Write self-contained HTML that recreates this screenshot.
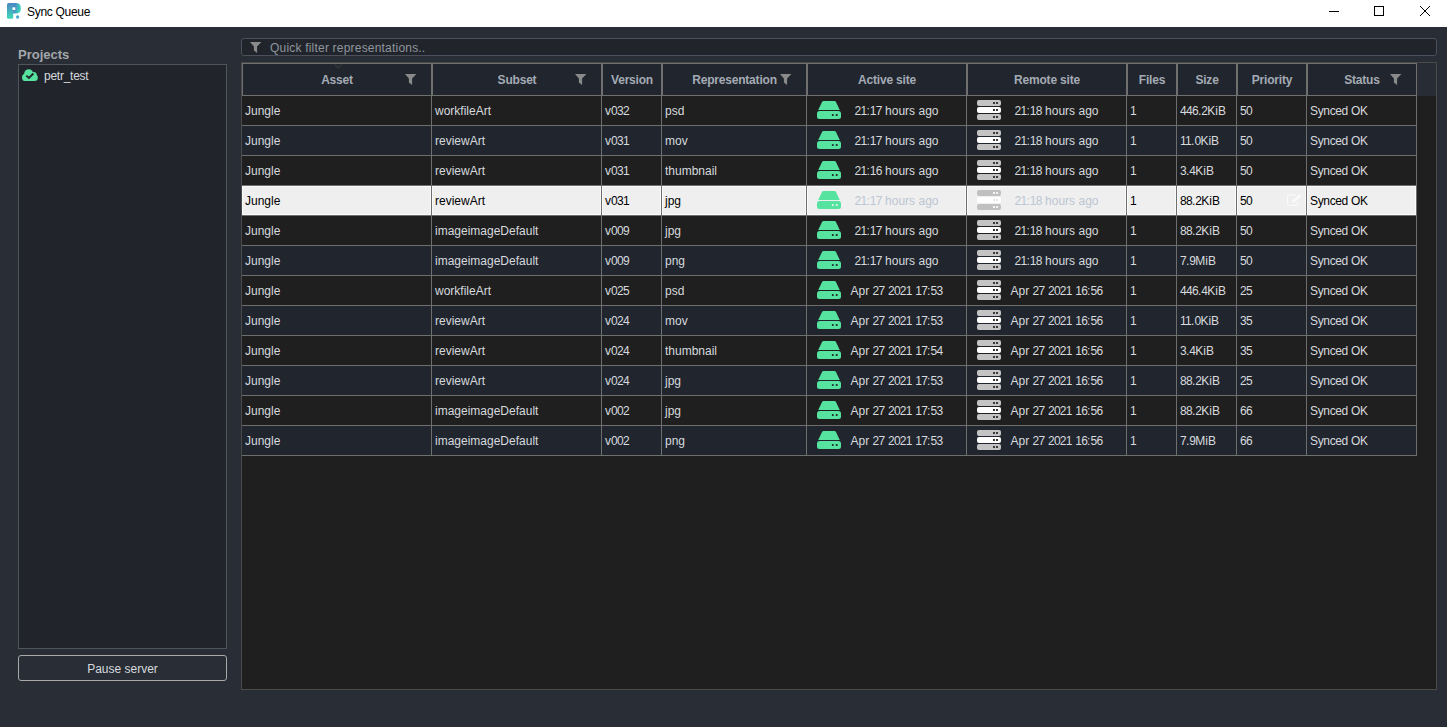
<!DOCTYPE html>
<html><head><meta charset="utf-8"><style>
html,body{margin:0;padding:0;width:1447px;height:727px;overflow:hidden;background:#292d35;font-family:"Liberation Sans",sans-serif;}
.a{position:absolute;}
.t{position:absolute;white-space:nowrap;font-size:12px;line-height:14px;height:14px;color:#d6dade;}
.h{position:absolute;white-space:nowrap;font-size:12px;font-weight:bold;line-height:16px;color:#a4abb4;text-align:center;letter-spacing:-0.2px}
.ln{position:absolute;background:#6e6e6e;}
</style></head><body>

<div class="a" style="left:0;top:0;width:1447px;height:27px;background:#ffffff"></div>
<svg class="a" style="left:7px;top:3px" width="15" height="17" viewBox="0 0 15 17"><defs><linearGradient id="lg1" x1="0" y1="0" x2="0" y2="1"><stop offset="0" stop-color="#4d86c6"/><stop offset="1" stop-color="#3ddbb5"/></linearGradient><linearGradient id="lg2" x1="0" y1="0" x2="1" y2="0.3"><stop offset="0.3" stop-color="#4a8cc8"/><stop offset="1" stop-color="#3cd8b8"/></linearGradient></defs>
<path d="M6 0H8.6Q13.9 0 13.9 5.3Q13.9 10.6 8.6 10.6H6Z" fill="url(#lg2)"/><path d="M1.5 0H6.2V14.2Q6.2 15.7 4.7 15.7H1.5Q0 15.7 0 14.2V1.5Q0 0 1.5 0Z" fill="url(#lg1)"/><rect x="5.5" y="4.3" width="2.8" height="2.8" rx="0.6" fill="#fff"/><circle cx="10.6" cy="14" r="1.65" fill="#48a6d6"/></svg>
<div class="t" style="left:27px;top:5px;color:#000;font-size:12px;letter-spacing:-0.3px">Sync Queue</div>
<div class="a" style="left:1329px;top:11px;width:10px;height:1px;background:#000"></div>
<div class="a" style="left:1374px;top:6px;width:8px;height:8px;border:1px solid #000"></div>
<svg class="a" style="left:1419px;top:5px" width="12" height="12" viewBox="0 0 12 12"><path d="M1 1L11 11M11 1L1 11" stroke="#000" stroke-width="1"/></svg>
<div class="a" style="left:18px;top:47px;font-size:13px;font-weight:bold;color:#a3a6ab;white-space:nowrap;line-height:16px">Projects</div>
<div class="a" style="left:18px;top:64px;width:207px;height:583px;border:1px solid #50545b;background:#21252b"></div>
<svg class="a" style="left:22px;top:69px" width="17" height="13" viewBox="0 0 17 13"><g fill="#56e39f"><circle cx="3.6" cy="8.4" r="3.6"/><circle cx="6.7" cy="4.8" r="4.5"/><circle cx="11.4" cy="6.4" r="3.4"/><circle cx="12.6" cy="8.8" r="3.2"/><rect x="3.6" y="6" width="9" height="6"/></g><path d="M4.3 6.6L6.9 9L11.4 4.5" stroke="#21252b" stroke-width="1.9" fill="none"/></svg>
<div class="t" style="left:44px;top:69px;letter-spacing:-0.25px">petr_test</div>
<div class="a" style="left:18px;top:655px;width:207px;height:24px;border:1px solid #a9a9a9;border-radius:3px;background:#292d35"></div>
<div class="t" style="left:18px;width:209px;text-align:center;top:662px">Pause server</div>
<div class="a" style="left:241px;top:38px;width:1194px;height:16px;border:1px solid #4b515c;border-radius:3px;background:#21252b"></div>
<svg class="a" style="left:249.5px;top:42px" width="12" height="11" viewBox="0 0 12 11"><path d="M0 0H11.4L7.1 4.6V11L3.9 8.4V4.6Z" fill="#8a8a8a"/></svg>
<div class="t" style="left:270px;top:41px;color:#8f959e;letter-spacing:0.2px">Quick filter representations..</div>
<div class="a" style="left:241px;top:62px;width:1194px;height:626px;border:1px solid #4a4a4a;background:#1f1f1f"></div>
<div class="a" style="left:242px;top:63px;width:1194px;height:33px;background:#282c34"></div>
<div class="a" style="left:242px;top:63px;width:188px;height:31px;border:1px solid #707070;background:#21252e"></div>
<div class="h" style="left:242px;width:190px;top:72px">Asset</div>
<svg class="a" style="left:405px;top:74px" width="12" height="11" viewBox="0 0 12 11"><path d="M0 0H11.4L7.1 4.6V11L3.9 8.4V4.6Z" fill="#8a8a8a"/></svg>
<div class="a" style="left:432px;top:63px;width:168px;height:31px;border:1px solid #707070;background:#21252e"></div>
<div class="h" style="left:432px;width:170px;top:72px">Subset</div>
<svg class="a" style="left:575px;top:74px" width="12" height="11" viewBox="0 0 12 11"><path d="M0 0H11.4L7.1 4.6V11L3.9 8.4V4.6Z" fill="#8a8a8a"/></svg>
<div class="a" style="left:602px;top:63px;width:58px;height:31px;border:1px solid #707070;background:#21252e"></div>
<div class="h" style="left:602px;width:60px;top:72px">Version</div>
<div class="a" style="left:662px;top:63px;width:143px;height:31px;border:1px solid #707070;background:#21252e"></div>
<div class="h" style="left:662px;width:145px;top:72px">Representation</div>
<svg class="a" style="left:780px;top:74px" width="12" height="11" viewBox="0 0 12 11"><path d="M0 0H11.4L7.1 4.6V11L3.9 8.4V4.6Z" fill="#8a8a8a"/></svg>
<div class="a" style="left:807px;top:63px;width:158px;height:31px;border:1px solid #707070;background:#21252e"></div>
<div class="h" style="left:807px;width:160px;top:72px">Active site</div>
<div class="a" style="left:967px;top:63px;width:158px;height:31px;border:1px solid #707070;background:#21252e"></div>
<div class="h" style="left:967px;width:160px;top:72px">Remote site</div>
<div class="a" style="left:1127px;top:63px;width:48px;height:31px;border:1px solid #707070;background:#21252e"></div>
<div class="h" style="left:1127px;width:50px;top:72px">Files</div>
<div class="a" style="left:1177px;top:63px;width:58px;height:31px;border:1px solid #707070;background:#21252e"></div>
<div class="h" style="left:1177px;width:60px;top:72px">Size</div>
<div class="a" style="left:1237px;top:63px;width:68px;height:31px;border:1px solid #707070;background:#21252e"></div>
<div class="h" style="left:1237px;width:70px;top:72px">Priority</div>
<div class="a" style="left:1307px;top:63px;width:108px;height:31px;border:1px solid #707070;background:#21252e"></div>
<div class="h" style="left:1307px;width:110px;top:72px">Status</div>
<svg class="a" style="left:1390px;top:74px" width="12" height="11" viewBox="0 0 12 11"><path d="M0 0H11.4L7.1 4.6V11L3.9 8.4V4.6Z" fill="#8a8a8a"/></svg>
<svg class="a" style="left:334px;top:64px" width="8" height="5" viewBox="0 0 8 5"><path d="M0.5 0.5L4 4L7.5 0.5" stroke="#34363a" stroke-width="1.2" fill="none"/></svg>
<div class="a" style="left:242px;top:96px;width:1174px;height:29px;background:#1f1f1f"></div>
<div class="ln" style="left:242px;top:125px;width:1175px;height:1px"></div>
<div class="t" style="left:245px;top:104px;color:#d6dade">Jungle</div>
<div class="t" style="left:435px;top:104px;color:#d6dade">workfileArt</div>
<div class="t" style="left:605px;top:104px;color:#d6dade">v<i style="font-style:normal;letter-spacing:-0.7px">032</i></div>
<div class="t" style="left:665px;top:104px;color:#d6dade">psd</div>
<div class="t" style="left:1130px;top:104px;color:#d6dade"><i style="font-style:normal;letter-spacing:-0.7px">1</i></div>
<div class="t" style="left:1180px;top:104px;color:#d6dade"><i style="font-style:normal;letter-spacing:-0.7px">446</i>.<i style="font-style:normal;letter-spacing:-0.7px">2</i>KiB</div>
<div class="t" style="left:1240px;top:104px;color:#d6dade"><i style="font-style:normal;letter-spacing:-0.7px">50</i></div>
<div class="t" style="left:1310px;top:104px;color:#d6dade;letter-spacing:-0.35px">Synced OK</div>
<svg class="a" style="left:817px;top:101px" width="24" height="18" viewBox="0 0 24 18"><path d="M6.6 0H17.4Q18.6 0 19.1 1.2L22.8 9H1.2L4.9 1.2Q5.4 0 6.6 0Z" fill="#56e39f"/><rect x="0" y="10" width="24" height="8" rx="2.5" fill="#56e39f"/><circle cx="15.8" cy="14" r="1.05" fill="#1f1f1f"/><circle cx="19.7" cy="14" r="1.05" fill="#1f1f1f"/></svg>
<div class="t" style="left:796.5px;width:200px;text-align:center;top:104px;color:#d6dade"><i style="font-style:normal;letter-spacing:-0.7px">21</i>:<i style="font-style:normal;letter-spacing:-0.7px">17</i> hours ago</div>
<svg class="a" style="left:977px;top:100px" width="24" height="20" viewBox="0 0 24 20"><rect x="0" y="0" width="24" height="6" rx="2" fill="#c4c4c4"/><rect x="16" y="2" width="2" height="2" fill="#3a3a3a"/><rect x="19" y="2" width="2" height="2" fill="#3a3a3a"/><rect x="0" y="7" width="24" height="6" rx="2" fill="#ffffff"/><rect x="16" y="9" width="2" height="2" fill="#3a3a3a"/><rect x="19" y="9" width="2" height="2" fill="#3a3a3a"/><rect x="0" y="14" width="24" height="6" rx="2" fill="#c4c4c4"/><rect x="16" y="16" width="2" height="2" fill="#3a3a3a"/><rect x="19" y="16" width="2" height="2" fill="#3a3a3a"/></svg>
<div class="t" style="left:956.5px;width:200px;text-align:center;top:104px;color:#d6dade"><i style="font-style:normal;letter-spacing:-0.7px">21</i>:<i style="font-style:normal;letter-spacing:-0.7px">18</i> hours ago</div>
<div class="a" style="left:242px;top:126px;width:1174px;height:29px;background:#21252e"></div>
<div class="ln" style="left:242px;top:155px;width:1175px;height:1px"></div>
<div class="t" style="left:245px;top:134px;color:#d6dade">Jungle</div>
<div class="t" style="left:435px;top:134px;color:#d6dade">reviewArt</div>
<div class="t" style="left:605px;top:134px;color:#d6dade">v<i style="font-style:normal;letter-spacing:-0.7px">031</i></div>
<div class="t" style="left:665px;top:134px;color:#d6dade">mov</div>
<div class="t" style="left:1130px;top:134px;color:#d6dade"><i style="font-style:normal;letter-spacing:-0.7px">1</i></div>
<div class="t" style="left:1180px;top:134px;color:#d6dade"><i style="font-style:normal;letter-spacing:-0.7px">11</i>.<i style="font-style:normal;letter-spacing:-0.7px">0</i>KiB</div>
<div class="t" style="left:1240px;top:134px;color:#d6dade"><i style="font-style:normal;letter-spacing:-0.7px">50</i></div>
<div class="t" style="left:1310px;top:134px;color:#d6dade;letter-spacing:-0.35px">Synced OK</div>
<svg class="a" style="left:817px;top:131px" width="24" height="18" viewBox="0 0 24 18"><path d="M6.6 0H17.4Q18.6 0 19.1 1.2L22.8 9H1.2L4.9 1.2Q5.4 0 6.6 0Z" fill="#56e39f"/><rect x="0" y="10" width="24" height="8" rx="2.5" fill="#56e39f"/><circle cx="15.8" cy="14" r="1.05" fill="#21252e"/><circle cx="19.7" cy="14" r="1.05" fill="#21252e"/></svg>
<div class="t" style="left:796.5px;width:200px;text-align:center;top:134px;color:#d6dade"><i style="font-style:normal;letter-spacing:-0.7px">21</i>:<i style="font-style:normal;letter-spacing:-0.7px">17</i> hours ago</div>
<svg class="a" style="left:977px;top:130px" width="24" height="20" viewBox="0 0 24 20"><rect x="0" y="0" width="24" height="6" rx="2" fill="#c4c4c4"/><rect x="16" y="2" width="2" height="2" fill="#3a3a3a"/><rect x="19" y="2" width="2" height="2" fill="#3a3a3a"/><rect x="0" y="7" width="24" height="6" rx="2" fill="#ffffff"/><rect x="16" y="9" width="2" height="2" fill="#3a3a3a"/><rect x="19" y="9" width="2" height="2" fill="#3a3a3a"/><rect x="0" y="14" width="24" height="6" rx="2" fill="#c4c4c4"/><rect x="16" y="16" width="2" height="2" fill="#3a3a3a"/><rect x="19" y="16" width="2" height="2" fill="#3a3a3a"/></svg>
<div class="t" style="left:956.5px;width:200px;text-align:center;top:134px;color:#d6dade"><i style="font-style:normal;letter-spacing:-0.7px">21</i>:<i style="font-style:normal;letter-spacing:-0.7px">18</i> hours ago</div>
<div class="a" style="left:242px;top:156px;width:1174px;height:29px;background:#1f1f1f"></div>
<div class="ln" style="left:242px;top:185px;width:1175px;height:1px"></div>
<div class="t" style="left:245px;top:164px;color:#d6dade">Jungle</div>
<div class="t" style="left:435px;top:164px;color:#d6dade">reviewArt</div>
<div class="t" style="left:605px;top:164px;color:#d6dade">v<i style="font-style:normal;letter-spacing:-0.7px">031</i></div>
<div class="t" style="left:665px;top:164px;color:#d6dade">thumbnail</div>
<div class="t" style="left:1130px;top:164px;color:#d6dade"><i style="font-style:normal;letter-spacing:-0.7px">1</i></div>
<div class="t" style="left:1180px;top:164px;color:#d6dade"><i style="font-style:normal;letter-spacing:-0.7px">3</i>.<i style="font-style:normal;letter-spacing:-0.7px">4</i>KiB</div>
<div class="t" style="left:1240px;top:164px;color:#d6dade"><i style="font-style:normal;letter-spacing:-0.7px">50</i></div>
<div class="t" style="left:1310px;top:164px;color:#d6dade;letter-spacing:-0.35px">Synced OK</div>
<svg class="a" style="left:817px;top:161px" width="24" height="18" viewBox="0 0 24 18"><path d="M6.6 0H17.4Q18.6 0 19.1 1.2L22.8 9H1.2L4.9 1.2Q5.4 0 6.6 0Z" fill="#56e39f"/><rect x="0" y="10" width="24" height="8" rx="2.5" fill="#56e39f"/><circle cx="15.8" cy="14" r="1.05" fill="#1f1f1f"/><circle cx="19.7" cy="14" r="1.05" fill="#1f1f1f"/></svg>
<div class="t" style="left:796.5px;width:200px;text-align:center;top:164px;color:#d6dade"><i style="font-style:normal;letter-spacing:-0.7px">21</i>:<i style="font-style:normal;letter-spacing:-0.7px">16</i> hours ago</div>
<svg class="a" style="left:977px;top:160px" width="24" height="20" viewBox="0 0 24 20"><rect x="0" y="0" width="24" height="6" rx="2" fill="#c4c4c4"/><rect x="16" y="2" width="2" height="2" fill="#3a3a3a"/><rect x="19" y="2" width="2" height="2" fill="#3a3a3a"/><rect x="0" y="7" width="24" height="6" rx="2" fill="#ffffff"/><rect x="16" y="9" width="2" height="2" fill="#3a3a3a"/><rect x="19" y="9" width="2" height="2" fill="#3a3a3a"/><rect x="0" y="14" width="24" height="6" rx="2" fill="#c4c4c4"/><rect x="16" y="16" width="2" height="2" fill="#3a3a3a"/><rect x="19" y="16" width="2" height="2" fill="#3a3a3a"/></svg>
<div class="t" style="left:956.5px;width:200px;text-align:center;top:164px;color:#d6dade"><i style="font-style:normal;letter-spacing:-0.7px">21</i>:<i style="font-style:normal;letter-spacing:-0.7px">18</i> hours ago</div>
<div class="a" style="left:242px;top:186px;width:187px;height:27px;border:1px solid #fafafa;background:#efefef"></div>
<div class="a" style="left:432px;top:186px;width:167px;height:27px;border:1px solid #fafafa;background:#efefef"></div>
<div class="a" style="left:602px;top:186px;width:57px;height:27px;border:1px solid #fafafa;background:#efefef"></div>
<div class="a" style="left:662px;top:186px;width:142px;height:27px;border:1px solid #fafafa;background:#efefef"></div>
<div class="a" style="left:807px;top:186px;width:157px;height:27px;border:1px solid #fafafa;background:#efefef"></div>
<div class="a" style="left:967px;top:186px;width:157px;height:27px;border:1px solid #fafafa;background:#efefef"></div>
<div class="a" style="left:1127px;top:186px;width:47px;height:27px;border:1px solid #fafafa;background:#efefef"></div>
<div class="a" style="left:1177px;top:186px;width:57px;height:27px;border:1px solid #fafafa;background:#efefef"></div>
<div class="a" style="left:1237px;top:186px;width:67px;height:27px;border:1px solid #fafafa;background:#efefef"></div>
<div class="a" style="left:1307px;top:186px;width:107px;height:27px;border:1px solid #fafafa;background:#efefef"></div>
<div class="ln" style="left:242px;top:215px;width:1175px;height:1px"></div>
<div class="t" style="left:245px;top:194px;color:#000000">Jungle</div>
<div class="t" style="left:435px;top:194px;color:#000000">reviewArt</div>
<div class="t" style="left:605px;top:194px;color:#000000">v<i style="font-style:normal;letter-spacing:-0.7px">031</i></div>
<div class="t" style="left:665px;top:194px;color:#000000">jpg</div>
<div class="t" style="left:1130px;top:194px;color:#000000"><i style="font-style:normal;letter-spacing:-0.7px">1</i></div>
<div class="t" style="left:1180px;top:194px;color:#000000"><i style="font-style:normal;letter-spacing:-0.7px">88</i>.<i style="font-style:normal;letter-spacing:-0.7px">2</i>KiB</div>
<div class="t" style="left:1240px;top:194px;color:#000000"><i style="font-style:normal;letter-spacing:-0.7px">50</i></div>
<div class="t" style="left:1310px;top:194px;color:#000000;letter-spacing:-0.35px">Synced OK</div>
<svg class="a" style="left:817px;top:191px" width="24" height="18" viewBox="0 0 24 18"><path d="M6.6 0H17.4Q18.6 0 19.1 1.2L22.8 9H1.2L4.9 1.2Q5.4 0 6.6 0Z" fill="#56e39f"/><rect x="0" y="10" width="24" height="8" rx="2.5" fill="#56e39f"/><circle cx="15.8" cy="14" r="1.05" fill="#efefef"/><circle cx="19.7" cy="14" r="1.05" fill="#efefef"/></svg>
<div class="t" style="left:796.5px;width:200px;text-align:center;top:194px;color:#bcc6d3"><i style="font-style:normal;letter-spacing:-0.7px">21</i>:<i style="font-style:normal;letter-spacing:-0.7px">17</i> hours ago</div>
<svg class="a" style="left:977px;top:190px" width="24" height="20" viewBox="0 0 24 20"><rect x="0" y="0" width="24" height="6" rx="2" fill="#c0c0c0"/><rect x="16" y="2" width="2" height="2" fill="#f4f4f4"/><rect x="19" y="2" width="2" height="2" fill="#f4f4f4"/><rect x="0" y="7" width="24" height="6" rx="2" fill="#ffffff"/><rect x="16" y="9" width="2" height="2" fill="#e8e8e8"/><rect x="19" y="9" width="2" height="2" fill="#e8e8e8"/><rect x="0" y="14" width="24" height="6" rx="2" fill="#c0c0c0"/><rect x="16" y="16" width="2" height="2" fill="#f4f4f4"/><rect x="19" y="16" width="2" height="2" fill="#f4f4f4"/></svg>
<div class="t" style="left:956.5px;width:200px;text-align:center;top:194px;color:#bcc6d3"><i style="font-style:normal;letter-spacing:-0.7px">21</i>:<i style="font-style:normal;letter-spacing:-0.7px">18</i> hours ago</div>
<svg class="a" style="left:1287px;top:194px" width="15" height="12" viewBox="0 0 15 12"><path d="M9 1H2.5Q0.5 1 0.5 3V9.5Q0.5 11.5 2.5 11.5H9Q11 11.5 11 9.5V7.5" stroke="#fbfbfb" stroke-width="1" fill="none"/><path d="M5 8.5L5.5 6.5L12.5 0.3L14.5 2L7.5 8.3Z" fill="#fafafa"/></svg>
<div class="a" style="left:242px;top:216px;width:1174px;height:29px;background:#1f1f1f"></div>
<div class="ln" style="left:242px;top:245px;width:1175px;height:1px"></div>
<div class="t" style="left:245px;top:224px;color:#d6dade">Jungle</div>
<div class="t" style="left:435px;top:224px;color:#d6dade">imageimageDefault</div>
<div class="t" style="left:605px;top:224px;color:#d6dade">v<i style="font-style:normal;letter-spacing:-0.7px">009</i></div>
<div class="t" style="left:665px;top:224px;color:#d6dade">jpg</div>
<div class="t" style="left:1130px;top:224px;color:#d6dade"><i style="font-style:normal;letter-spacing:-0.7px">1</i></div>
<div class="t" style="left:1180px;top:224px;color:#d6dade"><i style="font-style:normal;letter-spacing:-0.7px">88</i>.<i style="font-style:normal;letter-spacing:-0.7px">2</i>KiB</div>
<div class="t" style="left:1240px;top:224px;color:#d6dade"><i style="font-style:normal;letter-spacing:-0.7px">50</i></div>
<div class="t" style="left:1310px;top:224px;color:#d6dade;letter-spacing:-0.35px">Synced OK</div>
<svg class="a" style="left:817px;top:221px" width="24" height="18" viewBox="0 0 24 18"><path d="M6.6 0H17.4Q18.6 0 19.1 1.2L22.8 9H1.2L4.9 1.2Q5.4 0 6.6 0Z" fill="#56e39f"/><rect x="0" y="10" width="24" height="8" rx="2.5" fill="#56e39f"/><circle cx="15.8" cy="14" r="1.05" fill="#1f1f1f"/><circle cx="19.7" cy="14" r="1.05" fill="#1f1f1f"/></svg>
<div class="t" style="left:796.5px;width:200px;text-align:center;top:224px;color:#d6dade"><i style="font-style:normal;letter-spacing:-0.7px">21</i>:<i style="font-style:normal;letter-spacing:-0.7px">17</i> hours ago</div>
<svg class="a" style="left:977px;top:220px" width="24" height="20" viewBox="0 0 24 20"><rect x="0" y="0" width="24" height="6" rx="2" fill="#c4c4c4"/><rect x="16" y="2" width="2" height="2" fill="#3a3a3a"/><rect x="19" y="2" width="2" height="2" fill="#3a3a3a"/><rect x="0" y="7" width="24" height="6" rx="2" fill="#ffffff"/><rect x="16" y="9" width="2" height="2" fill="#3a3a3a"/><rect x="19" y="9" width="2" height="2" fill="#3a3a3a"/><rect x="0" y="14" width="24" height="6" rx="2" fill="#c4c4c4"/><rect x="16" y="16" width="2" height="2" fill="#3a3a3a"/><rect x="19" y="16" width="2" height="2" fill="#3a3a3a"/></svg>
<div class="t" style="left:956.5px;width:200px;text-align:center;top:224px;color:#d6dade"><i style="font-style:normal;letter-spacing:-0.7px">21</i>:<i style="font-style:normal;letter-spacing:-0.7px">18</i> hours ago</div>
<div class="a" style="left:242px;top:246px;width:1174px;height:29px;background:#21252e"></div>
<div class="ln" style="left:242px;top:275px;width:1175px;height:1px"></div>
<div class="t" style="left:245px;top:254px;color:#d6dade">Jungle</div>
<div class="t" style="left:435px;top:254px;color:#d6dade">imageimageDefault</div>
<div class="t" style="left:605px;top:254px;color:#d6dade">v<i style="font-style:normal;letter-spacing:-0.7px">009</i></div>
<div class="t" style="left:665px;top:254px;color:#d6dade">png</div>
<div class="t" style="left:1130px;top:254px;color:#d6dade"><i style="font-style:normal;letter-spacing:-0.7px">1</i></div>
<div class="t" style="left:1180px;top:254px;color:#d6dade"><i style="font-style:normal;letter-spacing:-0.7px">7</i>.<i style="font-style:normal;letter-spacing:-0.7px">9</i>MiB</div>
<div class="t" style="left:1240px;top:254px;color:#d6dade"><i style="font-style:normal;letter-spacing:-0.7px">50</i></div>
<div class="t" style="left:1310px;top:254px;color:#d6dade;letter-spacing:-0.35px">Synced OK</div>
<svg class="a" style="left:817px;top:251px" width="24" height="18" viewBox="0 0 24 18"><path d="M6.6 0H17.4Q18.6 0 19.1 1.2L22.8 9H1.2L4.9 1.2Q5.4 0 6.6 0Z" fill="#56e39f"/><rect x="0" y="10" width="24" height="8" rx="2.5" fill="#56e39f"/><circle cx="15.8" cy="14" r="1.05" fill="#21252e"/><circle cx="19.7" cy="14" r="1.05" fill="#21252e"/></svg>
<div class="t" style="left:796.5px;width:200px;text-align:center;top:254px;color:#d6dade"><i style="font-style:normal;letter-spacing:-0.7px">21</i>:<i style="font-style:normal;letter-spacing:-0.7px">17</i> hours ago</div>
<svg class="a" style="left:977px;top:250px" width="24" height="20" viewBox="0 0 24 20"><rect x="0" y="0" width="24" height="6" rx="2" fill="#c4c4c4"/><rect x="16" y="2" width="2" height="2" fill="#3a3a3a"/><rect x="19" y="2" width="2" height="2" fill="#3a3a3a"/><rect x="0" y="7" width="24" height="6" rx="2" fill="#ffffff"/><rect x="16" y="9" width="2" height="2" fill="#3a3a3a"/><rect x="19" y="9" width="2" height="2" fill="#3a3a3a"/><rect x="0" y="14" width="24" height="6" rx="2" fill="#c4c4c4"/><rect x="16" y="16" width="2" height="2" fill="#3a3a3a"/><rect x="19" y="16" width="2" height="2" fill="#3a3a3a"/></svg>
<div class="t" style="left:956.5px;width:200px;text-align:center;top:254px;color:#d6dade"><i style="font-style:normal;letter-spacing:-0.7px">21</i>:<i style="font-style:normal;letter-spacing:-0.7px">18</i> hours ago</div>
<div class="a" style="left:242px;top:276px;width:1174px;height:29px;background:#1f1f1f"></div>
<div class="ln" style="left:242px;top:305px;width:1175px;height:1px"></div>
<div class="t" style="left:245px;top:284px;color:#d6dade">Jungle</div>
<div class="t" style="left:435px;top:284px;color:#d6dade">workfileArt</div>
<div class="t" style="left:605px;top:284px;color:#d6dade">v<i style="font-style:normal;letter-spacing:-0.7px">025</i></div>
<div class="t" style="left:665px;top:284px;color:#d6dade">psd</div>
<div class="t" style="left:1130px;top:284px;color:#d6dade"><i style="font-style:normal;letter-spacing:-0.7px">1</i></div>
<div class="t" style="left:1180px;top:284px;color:#d6dade"><i style="font-style:normal;letter-spacing:-0.7px">446</i>.<i style="font-style:normal;letter-spacing:-0.7px">4</i>KiB</div>
<div class="t" style="left:1240px;top:284px;color:#d6dade"><i style="font-style:normal;letter-spacing:-0.7px">25</i></div>
<div class="t" style="left:1310px;top:284px;color:#d6dade;letter-spacing:-0.35px">Synced OK</div>
<svg class="a" style="left:817px;top:281px" width="24" height="18" viewBox="0 0 24 18"><path d="M6.6 0H17.4Q18.6 0 19.1 1.2L22.8 9H1.2L4.9 1.2Q5.4 0 6.6 0Z" fill="#56e39f"/><rect x="0" y="10" width="24" height="8" rx="2.5" fill="#56e39f"/><circle cx="15.8" cy="14" r="1.05" fill="#1f1f1f"/><circle cx="19.7" cy="14" r="1.05" fill="#1f1f1f"/></svg>
<div class="t" style="left:796.5px;width:200px;text-align:center;top:284px;color:#d6dade">Apr <i style="font-style:normal;letter-spacing:-0.7px">27</i> <i style="font-style:normal;letter-spacing:-0.7px">2021</i> <i style="font-style:normal;letter-spacing:-0.7px">17</i>:<i style="font-style:normal;letter-spacing:-0.7px">53</i></div>
<svg class="a" style="left:977px;top:280px" width="24" height="20" viewBox="0 0 24 20"><rect x="0" y="0" width="24" height="6" rx="2" fill="#c4c4c4"/><rect x="16" y="2" width="2" height="2" fill="#3a3a3a"/><rect x="19" y="2" width="2" height="2" fill="#3a3a3a"/><rect x="0" y="7" width="24" height="6" rx="2" fill="#ffffff"/><rect x="16" y="9" width="2" height="2" fill="#3a3a3a"/><rect x="19" y="9" width="2" height="2" fill="#3a3a3a"/><rect x="0" y="14" width="24" height="6" rx="2" fill="#c4c4c4"/><rect x="16" y="16" width="2" height="2" fill="#3a3a3a"/><rect x="19" y="16" width="2" height="2" fill="#3a3a3a"/></svg>
<div class="t" style="left:956.5px;width:200px;text-align:center;top:284px;color:#d6dade">Apr <i style="font-style:normal;letter-spacing:-0.7px">27</i> <i style="font-style:normal;letter-spacing:-0.7px">2021</i> <i style="font-style:normal;letter-spacing:-0.7px">16</i>:<i style="font-style:normal;letter-spacing:-0.7px">56</i></div>
<div class="a" style="left:242px;top:306px;width:1174px;height:29px;background:#21252e"></div>
<div class="ln" style="left:242px;top:335px;width:1175px;height:1px"></div>
<div class="t" style="left:245px;top:314px;color:#d6dade">Jungle</div>
<div class="t" style="left:435px;top:314px;color:#d6dade">reviewArt</div>
<div class="t" style="left:605px;top:314px;color:#d6dade">v<i style="font-style:normal;letter-spacing:-0.7px">024</i></div>
<div class="t" style="left:665px;top:314px;color:#d6dade">mov</div>
<div class="t" style="left:1130px;top:314px;color:#d6dade"><i style="font-style:normal;letter-spacing:-0.7px">1</i></div>
<div class="t" style="left:1180px;top:314px;color:#d6dade"><i style="font-style:normal;letter-spacing:-0.7px">11</i>.<i style="font-style:normal;letter-spacing:-0.7px">0</i>KiB</div>
<div class="t" style="left:1240px;top:314px;color:#d6dade"><i style="font-style:normal;letter-spacing:-0.7px">35</i></div>
<div class="t" style="left:1310px;top:314px;color:#d6dade;letter-spacing:-0.35px">Synced OK</div>
<svg class="a" style="left:817px;top:311px" width="24" height="18" viewBox="0 0 24 18"><path d="M6.6 0H17.4Q18.6 0 19.1 1.2L22.8 9H1.2L4.9 1.2Q5.4 0 6.6 0Z" fill="#56e39f"/><rect x="0" y="10" width="24" height="8" rx="2.5" fill="#56e39f"/><circle cx="15.8" cy="14" r="1.05" fill="#21252e"/><circle cx="19.7" cy="14" r="1.05" fill="#21252e"/></svg>
<div class="t" style="left:796.5px;width:200px;text-align:center;top:314px;color:#d6dade">Apr <i style="font-style:normal;letter-spacing:-0.7px">27</i> <i style="font-style:normal;letter-spacing:-0.7px">2021</i> <i style="font-style:normal;letter-spacing:-0.7px">17</i>:<i style="font-style:normal;letter-spacing:-0.7px">53</i></div>
<svg class="a" style="left:977px;top:310px" width="24" height="20" viewBox="0 0 24 20"><rect x="0" y="0" width="24" height="6" rx="2" fill="#c4c4c4"/><rect x="16" y="2" width="2" height="2" fill="#3a3a3a"/><rect x="19" y="2" width="2" height="2" fill="#3a3a3a"/><rect x="0" y="7" width="24" height="6" rx="2" fill="#ffffff"/><rect x="16" y="9" width="2" height="2" fill="#3a3a3a"/><rect x="19" y="9" width="2" height="2" fill="#3a3a3a"/><rect x="0" y="14" width="24" height="6" rx="2" fill="#c4c4c4"/><rect x="16" y="16" width="2" height="2" fill="#3a3a3a"/><rect x="19" y="16" width="2" height="2" fill="#3a3a3a"/></svg>
<div class="t" style="left:956.5px;width:200px;text-align:center;top:314px;color:#d6dade">Apr <i style="font-style:normal;letter-spacing:-0.7px">27</i> <i style="font-style:normal;letter-spacing:-0.7px">2021</i> <i style="font-style:normal;letter-spacing:-0.7px">16</i>:<i style="font-style:normal;letter-spacing:-0.7px">56</i></div>
<div class="a" style="left:242px;top:336px;width:1174px;height:29px;background:#1f1f1f"></div>
<div class="ln" style="left:242px;top:365px;width:1175px;height:1px"></div>
<div class="t" style="left:245px;top:344px;color:#d6dade">Jungle</div>
<div class="t" style="left:435px;top:344px;color:#d6dade">reviewArt</div>
<div class="t" style="left:605px;top:344px;color:#d6dade">v<i style="font-style:normal;letter-spacing:-0.7px">024</i></div>
<div class="t" style="left:665px;top:344px;color:#d6dade">thumbnail</div>
<div class="t" style="left:1130px;top:344px;color:#d6dade"><i style="font-style:normal;letter-spacing:-0.7px">1</i></div>
<div class="t" style="left:1180px;top:344px;color:#d6dade"><i style="font-style:normal;letter-spacing:-0.7px">3</i>.<i style="font-style:normal;letter-spacing:-0.7px">4</i>KiB</div>
<div class="t" style="left:1240px;top:344px;color:#d6dade"><i style="font-style:normal;letter-spacing:-0.7px">35</i></div>
<div class="t" style="left:1310px;top:344px;color:#d6dade;letter-spacing:-0.35px">Synced OK</div>
<svg class="a" style="left:817px;top:341px" width="24" height="18" viewBox="0 0 24 18"><path d="M6.6 0H17.4Q18.6 0 19.1 1.2L22.8 9H1.2L4.9 1.2Q5.4 0 6.6 0Z" fill="#56e39f"/><rect x="0" y="10" width="24" height="8" rx="2.5" fill="#56e39f"/><circle cx="15.8" cy="14" r="1.05" fill="#1f1f1f"/><circle cx="19.7" cy="14" r="1.05" fill="#1f1f1f"/></svg>
<div class="t" style="left:796.5px;width:200px;text-align:center;top:344px;color:#d6dade">Apr <i style="font-style:normal;letter-spacing:-0.7px">27</i> <i style="font-style:normal;letter-spacing:-0.7px">2021</i> <i style="font-style:normal;letter-spacing:-0.7px">17</i>:<i style="font-style:normal;letter-spacing:-0.7px">54</i></div>
<svg class="a" style="left:977px;top:340px" width="24" height="20" viewBox="0 0 24 20"><rect x="0" y="0" width="24" height="6" rx="2" fill="#c4c4c4"/><rect x="16" y="2" width="2" height="2" fill="#3a3a3a"/><rect x="19" y="2" width="2" height="2" fill="#3a3a3a"/><rect x="0" y="7" width="24" height="6" rx="2" fill="#ffffff"/><rect x="16" y="9" width="2" height="2" fill="#3a3a3a"/><rect x="19" y="9" width="2" height="2" fill="#3a3a3a"/><rect x="0" y="14" width="24" height="6" rx="2" fill="#c4c4c4"/><rect x="16" y="16" width="2" height="2" fill="#3a3a3a"/><rect x="19" y="16" width="2" height="2" fill="#3a3a3a"/></svg>
<div class="t" style="left:956.5px;width:200px;text-align:center;top:344px;color:#d6dade">Apr <i style="font-style:normal;letter-spacing:-0.7px">27</i> <i style="font-style:normal;letter-spacing:-0.7px">2021</i> <i style="font-style:normal;letter-spacing:-0.7px">16</i>:<i style="font-style:normal;letter-spacing:-0.7px">56</i></div>
<div class="a" style="left:242px;top:366px;width:1174px;height:29px;background:#21252e"></div>
<div class="ln" style="left:242px;top:395px;width:1175px;height:1px"></div>
<div class="t" style="left:245px;top:374px;color:#d6dade">Jungle</div>
<div class="t" style="left:435px;top:374px;color:#d6dade">reviewArt</div>
<div class="t" style="left:605px;top:374px;color:#d6dade">v<i style="font-style:normal;letter-spacing:-0.7px">024</i></div>
<div class="t" style="left:665px;top:374px;color:#d6dade">jpg</div>
<div class="t" style="left:1130px;top:374px;color:#d6dade"><i style="font-style:normal;letter-spacing:-0.7px">1</i></div>
<div class="t" style="left:1180px;top:374px;color:#d6dade"><i style="font-style:normal;letter-spacing:-0.7px">88</i>.<i style="font-style:normal;letter-spacing:-0.7px">2</i>KiB</div>
<div class="t" style="left:1240px;top:374px;color:#d6dade"><i style="font-style:normal;letter-spacing:-0.7px">25</i></div>
<div class="t" style="left:1310px;top:374px;color:#d6dade;letter-spacing:-0.35px">Synced OK</div>
<svg class="a" style="left:817px;top:371px" width="24" height="18" viewBox="0 0 24 18"><path d="M6.6 0H17.4Q18.6 0 19.1 1.2L22.8 9H1.2L4.9 1.2Q5.4 0 6.6 0Z" fill="#56e39f"/><rect x="0" y="10" width="24" height="8" rx="2.5" fill="#56e39f"/><circle cx="15.8" cy="14" r="1.05" fill="#21252e"/><circle cx="19.7" cy="14" r="1.05" fill="#21252e"/></svg>
<div class="t" style="left:796.5px;width:200px;text-align:center;top:374px;color:#d6dade">Apr <i style="font-style:normal;letter-spacing:-0.7px">27</i> <i style="font-style:normal;letter-spacing:-0.7px">2021</i> <i style="font-style:normal;letter-spacing:-0.7px">17</i>:<i style="font-style:normal;letter-spacing:-0.7px">53</i></div>
<svg class="a" style="left:977px;top:370px" width="24" height="20" viewBox="0 0 24 20"><rect x="0" y="0" width="24" height="6" rx="2" fill="#c4c4c4"/><rect x="16" y="2" width="2" height="2" fill="#3a3a3a"/><rect x="19" y="2" width="2" height="2" fill="#3a3a3a"/><rect x="0" y="7" width="24" height="6" rx="2" fill="#ffffff"/><rect x="16" y="9" width="2" height="2" fill="#3a3a3a"/><rect x="19" y="9" width="2" height="2" fill="#3a3a3a"/><rect x="0" y="14" width="24" height="6" rx="2" fill="#c4c4c4"/><rect x="16" y="16" width="2" height="2" fill="#3a3a3a"/><rect x="19" y="16" width="2" height="2" fill="#3a3a3a"/></svg>
<div class="t" style="left:956.5px;width:200px;text-align:center;top:374px;color:#d6dade">Apr <i style="font-style:normal;letter-spacing:-0.7px">27</i> <i style="font-style:normal;letter-spacing:-0.7px">2021</i> <i style="font-style:normal;letter-spacing:-0.7px">16</i>:<i style="font-style:normal;letter-spacing:-0.7px">56</i></div>
<div class="a" style="left:242px;top:396px;width:1174px;height:29px;background:#1f1f1f"></div>
<div class="ln" style="left:242px;top:425px;width:1175px;height:1px"></div>
<div class="t" style="left:245px;top:404px;color:#d6dade">Jungle</div>
<div class="t" style="left:435px;top:404px;color:#d6dade">imageimageDefault</div>
<div class="t" style="left:605px;top:404px;color:#d6dade">v<i style="font-style:normal;letter-spacing:-0.7px">002</i></div>
<div class="t" style="left:665px;top:404px;color:#d6dade">jpg</div>
<div class="t" style="left:1130px;top:404px;color:#d6dade"><i style="font-style:normal;letter-spacing:-0.7px">1</i></div>
<div class="t" style="left:1180px;top:404px;color:#d6dade"><i style="font-style:normal;letter-spacing:-0.7px">88</i>.<i style="font-style:normal;letter-spacing:-0.7px">2</i>KiB</div>
<div class="t" style="left:1240px;top:404px;color:#d6dade"><i style="font-style:normal;letter-spacing:-0.7px">66</i></div>
<div class="t" style="left:1310px;top:404px;color:#d6dade;letter-spacing:-0.35px">Synced OK</div>
<svg class="a" style="left:817px;top:401px" width="24" height="18" viewBox="0 0 24 18"><path d="M6.6 0H17.4Q18.6 0 19.1 1.2L22.8 9H1.2L4.9 1.2Q5.4 0 6.6 0Z" fill="#56e39f"/><rect x="0" y="10" width="24" height="8" rx="2.5" fill="#56e39f"/><circle cx="15.8" cy="14" r="1.05" fill="#1f1f1f"/><circle cx="19.7" cy="14" r="1.05" fill="#1f1f1f"/></svg>
<div class="t" style="left:796.5px;width:200px;text-align:center;top:404px;color:#d6dade">Apr <i style="font-style:normal;letter-spacing:-0.7px">27</i> <i style="font-style:normal;letter-spacing:-0.7px">2021</i> <i style="font-style:normal;letter-spacing:-0.7px">17</i>:<i style="font-style:normal;letter-spacing:-0.7px">53</i></div>
<svg class="a" style="left:977px;top:400px" width="24" height="20" viewBox="0 0 24 20"><rect x="0" y="0" width="24" height="6" rx="2" fill="#c4c4c4"/><rect x="16" y="2" width="2" height="2" fill="#3a3a3a"/><rect x="19" y="2" width="2" height="2" fill="#3a3a3a"/><rect x="0" y="7" width="24" height="6" rx="2" fill="#ffffff"/><rect x="16" y="9" width="2" height="2" fill="#3a3a3a"/><rect x="19" y="9" width="2" height="2" fill="#3a3a3a"/><rect x="0" y="14" width="24" height="6" rx="2" fill="#c4c4c4"/><rect x="16" y="16" width="2" height="2" fill="#3a3a3a"/><rect x="19" y="16" width="2" height="2" fill="#3a3a3a"/></svg>
<div class="t" style="left:956.5px;width:200px;text-align:center;top:404px;color:#d6dade">Apr <i style="font-style:normal;letter-spacing:-0.7px">27</i> <i style="font-style:normal;letter-spacing:-0.7px">2021</i> <i style="font-style:normal;letter-spacing:-0.7px">16</i>:<i style="font-style:normal;letter-spacing:-0.7px">56</i></div>
<div class="a" style="left:242px;top:426px;width:1174px;height:29px;background:#21252e"></div>
<div class="ln" style="left:242px;top:455px;width:1175px;height:1px"></div>
<div class="t" style="left:245px;top:434px;color:#d6dade">Jungle</div>
<div class="t" style="left:435px;top:434px;color:#d6dade">imageimageDefault</div>
<div class="t" style="left:605px;top:434px;color:#d6dade">v<i style="font-style:normal;letter-spacing:-0.7px">002</i></div>
<div class="t" style="left:665px;top:434px;color:#d6dade">png</div>
<div class="t" style="left:1130px;top:434px;color:#d6dade"><i style="font-style:normal;letter-spacing:-0.7px">1</i></div>
<div class="t" style="left:1180px;top:434px;color:#d6dade"><i style="font-style:normal;letter-spacing:-0.7px">7</i>.<i style="font-style:normal;letter-spacing:-0.7px">9</i>MiB</div>
<div class="t" style="left:1240px;top:434px;color:#d6dade"><i style="font-style:normal;letter-spacing:-0.7px">66</i></div>
<div class="t" style="left:1310px;top:434px;color:#d6dade;letter-spacing:-0.35px">Synced OK</div>
<svg class="a" style="left:817px;top:431px" width="24" height="18" viewBox="0 0 24 18"><path d="M6.6 0H17.4Q18.6 0 19.1 1.2L22.8 9H1.2L4.9 1.2Q5.4 0 6.6 0Z" fill="#56e39f"/><rect x="0" y="10" width="24" height="8" rx="2.5" fill="#56e39f"/><circle cx="15.8" cy="14" r="1.05" fill="#21252e"/><circle cx="19.7" cy="14" r="1.05" fill="#21252e"/></svg>
<div class="t" style="left:796.5px;width:200px;text-align:center;top:434px;color:#d6dade">Apr <i style="font-style:normal;letter-spacing:-0.7px">27</i> <i style="font-style:normal;letter-spacing:-0.7px">2021</i> <i style="font-style:normal;letter-spacing:-0.7px">17</i>:<i style="font-style:normal;letter-spacing:-0.7px">53</i></div>
<svg class="a" style="left:977px;top:430px" width="24" height="20" viewBox="0 0 24 20"><rect x="0" y="0" width="24" height="6" rx="2" fill="#c4c4c4"/><rect x="16" y="2" width="2" height="2" fill="#3a3a3a"/><rect x="19" y="2" width="2" height="2" fill="#3a3a3a"/><rect x="0" y="7" width="24" height="6" rx="2" fill="#ffffff"/><rect x="16" y="9" width="2" height="2" fill="#3a3a3a"/><rect x="19" y="9" width="2" height="2" fill="#3a3a3a"/><rect x="0" y="14" width="24" height="6" rx="2" fill="#c4c4c4"/><rect x="16" y="16" width="2" height="2" fill="#3a3a3a"/><rect x="19" y="16" width="2" height="2" fill="#3a3a3a"/></svg>
<div class="t" style="left:956.5px;width:200px;text-align:center;top:434px;color:#d6dade">Apr <i style="font-style:normal;letter-spacing:-0.7px">27</i> <i style="font-style:normal;letter-spacing:-0.7px">2021</i> <i style="font-style:normal;letter-spacing:-0.7px">16</i>:<i style="font-style:normal;letter-spacing:-0.7px">56</i></div>
<div class="ln" style="left:431px;top:96px;width:1px;height:360px"></div>
<div class="ln" style="left:601px;top:96px;width:1px;height:360px"></div>
<div class="ln" style="left:661px;top:96px;width:1px;height:360px"></div>
<div class="ln" style="left:806px;top:96px;width:1px;height:360px"></div>
<div class="ln" style="left:966px;top:96px;width:1px;height:360px"></div>
<div class="ln" style="left:1126px;top:96px;width:1px;height:360px"></div>
<div class="ln" style="left:1176px;top:96px;width:1px;height:360px"></div>
<div class="ln" style="left:1236px;top:96px;width:1px;height:360px"></div>
<div class="ln" style="left:1306px;top:96px;width:1px;height:360px"></div>
<div class="ln" style="left:1416px;top:96px;width:1px;height:360px"></div>
</body></html>
